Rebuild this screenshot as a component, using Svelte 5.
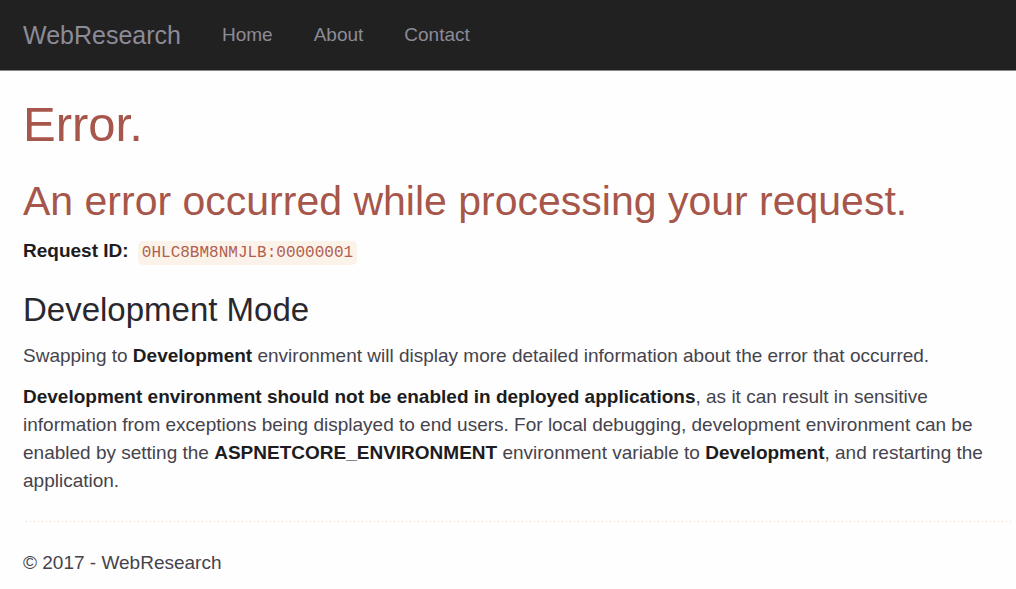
<script>
  const links = ['Home', 'About', 'Contact'];
</script>

<svelte:head><title>Error - WebResearch</title></svelte:head>

<nav>
  <a class="brand" href="#home">WebResearch</a>
  <ul>
    {#each links as link}
      <li><a href="#{link.toLowerCase()}">{link}</a></li>
    {/each}
  </ul>
</nav>

<main>
  <h1>Error.</h1>
  <h2>An error occurred while processing your request.</h2>
  <p class="request"><strong>Request ID:</strong> <code>0HLC8BM8NMJLB:00000001</code></p>
  <h3>Development Mode</h3>
  <p>Swapping to <strong>Development</strong> environment will display more detailed information about the error that occurred.</p>
  <p><strong>Development environment should not be enabled in deployed applications</strong>, as it can result in sensitive information from exceptions being displayed to end users. For local debugging, development environment can be enabled by setting the <strong>ASPNETCORE_ENVIRONMENT</strong> environment variable to <strong>Development</strong>, and restarting the application.</p>
  <hr />
  <footer><p>© 2017 - WebResearch</p></footer>
</main>

<style>
  :global(body) {
    margin: 0;
    background: #fefefe;
    color: #45434c;
    font: 19px/28px "Liberation Sans", Arial, sans-serif;
  }
  nav {
    display: flex;
    align-items: center;
    height: 70px;
    padding: 0 23px;
    border-bottom: 1px solid #8b8589;
    background: #212121;
  }
  nav a { color: #8c8b98; text-decoration: none; }
  .brand { font-size: 25px; margin-right: 41px; }
  ul { display: flex; gap: 41px; margin: 0; padding: 0; list-style: none; }
  main { padding: 25px 4px 0 23px; }
  h1, h2, h3 { margin: 0; font-weight: 400; }
  h1, h2 { color: #a6564a; }
  h1 { font-size: 49px; line-height: 56px; margin-bottom: 26px; }
  h2 { font-size: 41px; line-height: 46px; margin-bottom: 13px; }
  h3 { font-size: 33px; line-height: 36px; margin: 27px 0 14px; color: #29282f; }
  p { margin: 0 0 13px; }
  strong { color: #1d1c20; }
  code {
    margin-left: 4px;
    padding: 3px 4px;
    border-radius: 5px;
    background: #fbf3ea;
    color: #b1604f;
    font: 16px "Liberation Mono", monospace;
  }
  hr {
    height: 1px;
    margin: 26px 0 27px;
    border: 0;
    background: repeating-linear-gradient(90deg, #fefefe 0 3px, #f3d9c4 3px 4px);
  }
</style>
